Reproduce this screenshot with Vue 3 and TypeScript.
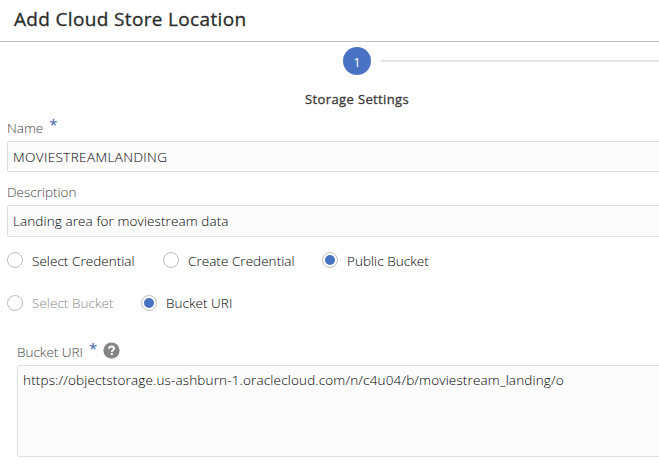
<script setup lang="ts">
import { ref } from 'vue'

interface Choice {
  id: string
  label: string
  disabled?: boolean
}

const name = ref('MOVIESTREAMLANDING')
const description = ref('Landing area for moviestream data')
const uri = ref('https://objectstorage.us-ashburn-1.oraclecloud.com/n/c4u04/b/moviestream_landing/o')
const access = ref('public')
const source = ref('uri')

const accessChoices: Choice[] = [
  { id: 'select', label: 'Select Credential' },
  { id: 'create', label: 'Create Credential' },
  { id: 'public', label: 'Public Bucket' },
]
const sourceChoices: Choice[] = [
  { id: 'bucket', label: 'Select Bucket', disabled: true },
  { id: 'uri', label: 'Bucket URI' },
]
</script>

<template>
  <main class="dialog">
    <header class="header"><h1 class="title">Add Cloud Store Location</h1></header>

    <div class="train">
      <div class="step"><span class="num">1</span></div>
      <div class="line"></div>
    </div>
    <div class="step-label"><span class="step-text">Storage Settings</span></div>

    <form class="form">
      <label class="label" for="name"><span>Name</span><span class="star">*</span></label>
      <input id="name" v-model="name" class="input t-value" />

      <label class="label second" for="description"><span>Description</span></label>
      <input id="description" v-model="description" class="input tall t-landing" />

      <div class="radios first-row">
        <label v-for="c in accessChoices" :key="c.id" class="choice" :class="'c-' + c.id">
          <span class="radio" :class="{ on: access === c.id }" @click="access = c.id"></span>
          <span class="choice-text">{{ c.label }}</span>
        </label>
      </div>
      <div class="radios second-row">
        <label v-for="c in sourceChoices" :key="c.id" class="choice" :class="['c-' + c.id, { disabled: c.disabled }]">
          <span class="radio" :class="{ on: source === c.id }"></span>
          <span class="choice-text">{{ c.label }}</span>
        </label>
      </div>

      <section class="uri">
        <label class="label" for="uri">
          <span>Bucket URI</span><span class="star">*</span>
          <svg class="help" width="17" height="17" viewBox="0 0 17 17">
            <circle cx="8.5" cy="8.5" r="8.1" fill="#858585" />
            <path d="M6.1 6.8C6.1 5.2 7 4.5 8.5 4.5s2.5.8 2.5 2.1c0 1.7-2.2 1.7-2.2 3.3" fill="none" stroke="#fff" stroke-width="1.9" />
            <rect x="7.8" y="11" width="2" height="2" fill="#fff" />
          </svg>
        </label>
        <textarea id="uri" v-model="uri" class="area" spellcheck="false"></textarea>
      </section>
    </form>
  </main>
</template>

<style>
body {
  margin: 0;
  overflow: hidden;
  background: #fff;
}
</style>

<style scoped>
.dialog {
  width: 659px;
  height: 474px;
  overflow: hidden;
  box-sizing: border-box;
  font-family: "Open Sans", "Noto Sans", sans-serif;
  font-size: 13.5px;
  font-weight: 300;
  color: #000;
  background: #fff;
}
.header {
  height: 41px;
  border-bottom: 1px solid #c4c4c4;
  padding-left: 14px;
}
.title {
  margin: 0;
  font-size: 19px;
  font-weight: 400;
  line-height: 38px;
  letter-spacing: 0.34px;
  color: #2b2b2b;
  -webkit-text-stroke: 0.3px #2b2b2b;
  white-space: nowrap;
}
.train {
  display: flex;
  align-items: center;
  gap: 10px;
  height: 28px;
  padding: 5px 0 0 343px;
}
.step {
  flex: none;
  width: 28px;
  height: 28px;
  border-radius: 50%;
  background: #4a72c4;
  color: #fff;
  font-size: 13px;
  font-weight: 400;
  line-height: 30px;
  text-align: center;
}
.line {
  flex: 1;
  height: 2px;
  background: #e4e4e4;
}
.step-label {
  width: 104px;
  height: 20px;
  margin: 14px 0 0 305px;
  font-size: 13px;
  font-weight: 400;
  line-height: 20px;
  letter-spacing: 0.38px;
  color: #383838;
  -webkit-text-stroke: 0.3px #383838;
  white-space: nowrap;
}
.form {
  padding: 9px 0 0 7px;
}
.label {
  display: flex;
  height: 23px;
  line-height: 20px;
  color: #444;
  white-space: nowrap;
}
.star {
  margin: -4px 0 0 6px;
  font-size: 15px;
  font-weight: 400;
  color: #3d5fb0;
}
.input,
.area {
  display: block;
  box-sizing: border-box;
  width: 660px;
  margin: 0;
  padding: 0 5px;
  border: 1px solid #dfdfdf;
  border-radius: 2px;
  outline: none;
  background: #fcfcfc;
  color: #000;
  font: inherit;
}
.input {
  height: 31px;
}
.t-value {
  letter-spacing: 0.38px;
}
.t-landing {
  letter-spacing: 0.1px;
}
.tall {
  height: 32px;
}
.second {
  margin-top: 10px;
}
.radios {
  display: flex;
  height: 20px;
}
.first-row {
  margin-top: 13px;
}
.second-row {
  margin-top: 23px;
}
.choice {
  display: flex;
  align-items: center;
  gap: 9px;
  line-height: 20px;
  letter-spacing: 0.04px;
  white-space: nowrap;
}
.c-select {
  width: 156px;
}
.c-create {
  width: 159px;
}
.c-bucket {
  width: 134px;
}
.disabled {
  color: #8a8a8a;
}
.radio {
  display: grid;
  place-items: center;
  flex: none;
  box-sizing: border-box;
  width: 16px;
  height: 16px;
  border: 1px solid #bdbdbd;
  border-radius: 50%;
}
.on::after {
  width: 10px;
  height: 10px;
  border-radius: 50%;
  background: #4a72c4;
  content: "";
}
.first-row .choice-text {
  padding-top: 2px;
}
.uri {
  padding: 29px 0 0 10px;
}
.help {
  margin: 0 0 0 6px;
}
.area {
  height: 92px;
  padding: 5px;
  line-height: 19px;
  letter-spacing: 0.16px;
  resize: none;
  overflow: hidden;
}
</style>
